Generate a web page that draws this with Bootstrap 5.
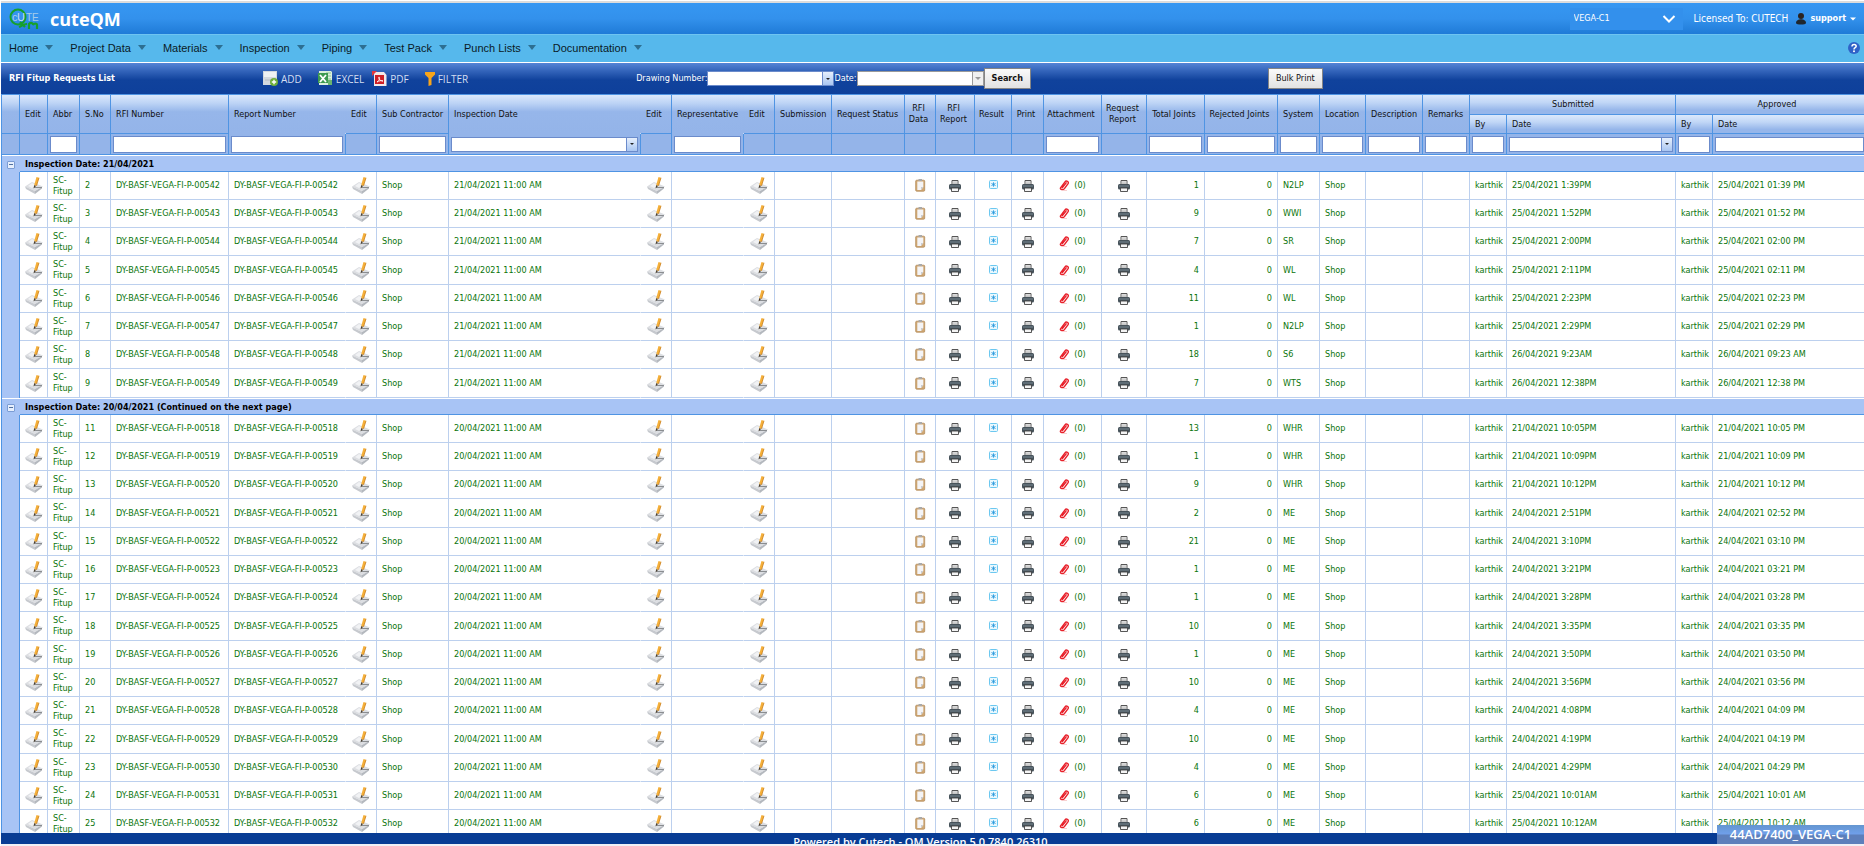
<!DOCTYPE html>
<html lang="en">
<head>
<meta charset="utf-8">
<meta name="viewport" content="width=device-width, initial-scale=1">
<title>cuteQM - RFI Fitup Requests List</title>
<link rel="stylesheet" href="https://cdn.jsdelivr.net/npm/bootstrap@5.3.0/dist/css/bootstrap.min.css">
<style>
:root{--line:#4f94e3;--soft:#bcd0ee;--ui:"DejaVu Sans Condensed","DejaVu Sans",sans-serif}
body{font-family:var(--ui);font-size:9px;line-height:11px;color:#111;background:#fff;padding:1px 0 0 1px}
input,select,button{font-family:inherit;font-size:inherit;line-height:inherit}
a{text-decoration:none}
.topline{height:2px;background:#dcdcdc}
.brandbar{height:31px;background:linear-gradient(#3697f2,#3391ec 50%,#1f7bd7);color:#fff;font-size:10px}
.brandname{font:bold 18px/24px "Open Sans",sans-serif;color:#fff;margin-left:10px}
.project{appearance:none;width:113px;height:22px;border:0;padding:0 4px;color:#fff;font-size:9px;margin-right:11px;
 background:#3390ec url("data:image/svg+xml,%3Csvg xmlns='http://www.w3.org/2000/svg' width='14' height='8'%3E%3Cpath d='M1.5 1l5.500 5.500L12.500 1' fill='none' stroke='%23fff' stroke-width='2'/%3E%3C/svg%3E") no-repeat right 7px center}
.user{font-weight:bold;color:#fff;font-size:9px}
.menubar{height:28px;padding-bottom:2px;background:#56b8ec;border-top:1px solid #6fc4f1;margin-bottom:1px;font:11px/14px "Liberation Sans",sans-serif}
.menubar .menu-item{color:#0a1a26;margin-right:17px;gap:7px}
.tri{border:4px solid transparent;border-top:5px solid #2d6f92;border-bottom:0}
.toolbar{height:31px;background:linear-gradient(#5484d6,#3465bb 25%,#10429c 55%,#0e409b);color:#fff}
.toolbar h1{font-size:9px;line-height:11px;width:254px}
.tool{font:10px/14px "Open Sans",sans-serif;color:#d4def2;gap:3px}
.searchset{margin-left:160px}
.searchset label{white-space:nowrap}
.bulk{margin-left:237px}
.pick{height:15px;border:1px solid #6b8bcb;background:#fff}
.pick input{border:0;outline:0;padding:0 2px;min-width:0;flex:1;background:#fff}
.pick button{border:0;border-left:1px solid #6b8bcb;width:11px;padding:0;background:linear-gradient(#e6effc,#a9c6f2)}
.pick button::after{content:"";border:2px solid transparent;border-top-color:#222;border-bottom:0}
.pick.wide{width:127px}
.pick.gray,.pick.gray button{border-color:#9a9a9a}
.pick.gray button{background:#f0f0f0}
.pick.gray button::after{border-width:3px;border-bottom:0;border-top-color:#999}
.push{border:1px solid #858585;border-radius:0;background:linear-gradient(#fafafa,#e2e2e2);color:#111;height:21px;padding:0 7px}
.gridwrap{min-height:0;overflow:hidden;background:#fff}
.listing{table-layout:fixed;width:calc(100% + 14px);border-collapse:separate;border-spacing:0;border-top:1px solid var(--line);border-left:1px solid var(--line)}
.listing th{font-weight:normal;padding:0 4px 0 5px;border-right:1px solid var(--line);border-bottom:1px solid var(--line);background:linear-gradient(#dbe8fc,#bcd3f5 22%,#96b6ea 44%,#94b4e9);vertical-align:middle}
.listing th.mid{text-align:center;padding:0 6px 0 3px}
.listing .r1{height:20px}.listing .r2{height:19px}.listing .r3{height:21px}
.listing .r1 th[colspan],.listing .r2 th{background:linear-gradient(#dbe8fc,#c0d6f6 40%,#96b6ea 80%)}
.listing th.open-b{border-bottom-color:#94b4e9}
.listing th.open-r{border-right-color:transparent}
.listing .r3 th{background:#94b4e9;padding:0 2px}
.listing .r3 input.plain{display:block;width:100%;height:17px;border:1px solid #6b8bcb;border-radius:0;background:#fff;outline:0;padding:0 2px}
.listing td{height:28px;padding:0 5px;border-right:1px solid var(--soft);border-bottom:1px solid var(--soft);color:#0a740a}
.listing tr.tall td{height:29px}
.listing td.open-r{border-right-color:transparent}
.listing td.side{background:#a8c4f5;border-right-color:var(--line);border-bottom:0;padding:0}
.listing .group td{height:17px;padding-top:2px;background:#a8c4f5;border-top:1px solid #fff;border-bottom:1px solid var(--line);border-right:0;color:#000;font-weight:bold}
.listing .group td.side{border-bottom-color:#a8c4f5;text-align:center}
.listing svg{display:block}
.fold{width:8px;height:8px;border:1px solid #7b9cd4;border-radius:1px;background:#e6effd;padding:0;display:block;margin:0 auto}
.fold::after{content:"";display:block;height:1px;background:#52719f;margin:0 1px}
.foot{height:13px;overflow:hidden;background:#083c94;border-bottom:2px solid #f0f0f6;color:#fff;padding-right:24px;font:600 11px/18px "Open Sans",sans-serif}
.stamp{right:0;bottom:2px;height:19px;width:147px;background:linear-gradient(#6496d0,#6f9fe9 45%,#5d7fbb 55%);color:#fff;font:600 13px/19px "Open Sans",sans-serif}
</style>
</head>
<body class="vh-100 d-flex flex-column overflow-hidden position-relative">
<svg class="d-none" aria-hidden="true">
 <symbol id="i-edit" viewBox="0 0 18 17"><path d="M0 9.500L7 5l11 4.500L10 14z" fill="#dcdee2"/><path d="M0 9.500L10 14v3L1 12z" fill="#c6c9ce"/><path d="M10 14l7-4v1.500L10 17z" fill="#b4b8be"/><path d="M3 9l4-3 4 2-4 3z" fill="#f1f2f4"/><path d="M9 10.500h8" stroke="#8a8d90" stroke-width="1"/><path d="M8.500 11.500l.8-3.500 2 .8z" fill="#4c4030"/><path d="M9.200 8L11.500 0l2.500.8-2.500 8z" fill="#f5b03a"/><path d="M11.500 8.800L14 .8" stroke="#c97d1a" stroke-width=".8"/></symbol>
 <symbol id="i-clip" viewBox="0 0 11 13"><rect x=".7" y="1.200" width="9" height="11" rx="1" fill="#d0a874" stroke="#b48c5a" stroke-width=".8"/><path d="M2.300 2.500h6V8L6 11H2.300z" fill="#f4f4f6"/><path d="M8.300 8L6 11V8z" fill="#c9ccd2"/><rect x="3.500" width="3.500" height="2" fill="#a9a9a9"/></symbol>
 <symbol id="i-print" viewBox="0 0 12 12"><path d="M3 .5h6v4H3z" fill="#fff" stroke="#555" stroke-width="1"/><path d="M4 2h4M4 3.300h4" stroke="#888" stroke-width=".6"/><rect y="4" width="12" height="5.500" rx="1.500" fill="#46525a"/><path d="M1 6h10" stroke="#8fa2ac" stroke-width=".7"/><path d="M2.500 8h7v3.500h-7z" fill="#f4f4f4" stroke="#444" stroke-width=".9"/></symbol>
 <symbol id="i-result" viewBox="0 0 9 11"><rect x=".5" y=".5" width="8" height="8" rx="1" fill="#e9f8fe" stroke="#6cc8f0"/><path d="M4.500 2.300v4.400M2.500 3.500l4 2M6.500 3.500l-4 2" stroke="#2a9ade" stroke-width=".9"/></symbol>
 <symbol id="i-attach" viewBox="0 0 11 11"><path d="M1.500 8L6 1.800c1.200-1.600 4.200-.2 3.100 1.800L5.400 8.600C4.300 10 .8 9.800 1.500 8zM3.600 7.400L7.200 2.900" fill="none" stroke="#e8202a" stroke-width="1.400" stroke-linecap="round"/><path d="M3 10.500h5" stroke="#f6c4c4" stroke-width=".8"/></symbol>
</svg>

<div class="topline flex-shrink-0"></div>
<header class="brandbar d-flex align-items-center flex-shrink-0">
 <svg class="ms-2" width="31" height="22" viewBox="0 0 31 22" role="img" aria-label="Cutech logo"><circle cx="9" cy="9" r="7.500" fill="none" stroke="#16a02c" stroke-width="2"/><path d="M11 14l5 5M10 19c3-1 4-3 8-3M20 21v-5c2-2 4-1 4 1 1-2 4-2 4 0v4" fill="none" stroke="#16a02c" stroke-width="2.200"/><text x="3" y="13" font-family="Liberation Sans, sans-serif" font-size="11" fill="#a8cdea">c</text><text x="8" y="13" font-family="Liberation Sans, sans-serif" font-size="11" fill="#c4ddef">U</text><text x="17" y="13" font-family="Liberation Sans, sans-serif" font-size="10" fill="#a8cdea">TE</text></svg>
 <a class="brandname" href="#">cuteQM</a>
 <select class="project ms-auto" aria-label="Project"><option>VEGA-C1</option></select>
 <span>Licensed To: CUTECH</span>
 <a class="user d-flex align-items-center ms-2 me-2" href="#"><svg class="me-1" width="10" height="12" viewBox="0 0 10 12"><circle cx="5" cy="3" r="3" fill="#2b2320"/><path d="M0 10c0-5 10-5 10 0 0 2-10 2-10 0z" fill="#1f262e"/></svg>support<svg class="ms-1" width="6" height="4"><path d="M0 .5h6L3 3.500z" fill="#fff"/></svg></a>
</header>

<nav class="menubar d-flex align-items-center flex-shrink-0" aria-label="Main">
 <div class="d-flex ms-2" id="menu"></div>
 <a class="ms-auto me-1 d-flex" href="#" aria-label="Help"><svg width="12" height="12" viewBox="0 0 12 12"><circle cx="6" cy="6" r="6" fill="#2f62c8"/><path d="M4 4.500c0-3 4.200-2.500 4.200-.3C8.200 5.700 6 5.600 6 7.400" fill="none" stroke="#fff" stroke-width="1.500"/><circle cx="6" cy="9.300" r="1" fill="#fff"/></svg></a>
</nav>

<div class="toolbar d-flex align-items-center flex-shrink-0 ps-2">
 <h1 class="mb-0 fw-bold flex-shrink-0">RFI Fitup Requests List</h1>
 <a class="tool d-flex align-items-center me-3" href="#"><svg width="15" height="15" viewBox="0 0 15 15"><path d="M0 0h14v14H0z" fill="#d3d9df"/><path d="M1 1h12v5H1z" fill="#eef1f3"/><path d="M2 9h7" stroke="#b5bcc4"/><circle cx="11" cy="11" r="4" fill="#6fae3a"/><path d="M11 8.800v4.400M8.800 11h4.400" stroke="#fff" stroke-width="1.400"/></svg>ADD</a>
 <a class="tool d-flex align-items-center me-2" href="#"><svg width="15" height="15" viewBox="0 0 15 15"><path d="M1 0h12l1 1v13H1z" fill="#dcefdc"/><path d="M8 2h5M8 5h5M8 8h5" stroke="#8cc490"/><path d="M0 2h10v10H0z" fill="#3d9a50"/><path d="M2 4l6 7M8 4l-6 7" stroke="#fff" stroke-width="1.800"/><path d="M10 9h4v5h-4z" fill="#6ab46f"/></svg>EXCEL</a>
 <a class="tool d-flex align-items-center me-3" href="#"><svg width="15" height="16" viewBox="0 0 15 16"><path d="M2 1h10l2.500 3v11H2z" fill="#f3e9e9"/><path d="M3 4h9v9H3z" fill="#cf1f26"/><path d="M5 11c3-2 3-5 2-5s0 4 4 4c-2-1-4 0-6 1z" fill="none" stroke="#fff" stroke-width=".9"/><path d="M0 0h5L0 5z" fill="#e2373c"/></svg>PDF</a>
 <a class="tool d-flex align-items-center" href="#"><svg width="10" height="14" viewBox="0 0 10 14"><path d="M0 0h10v2.500L6.500 6v7l-3 1V6L0 2.500z" fill="#f9a51a"/></svg>FILTER</a>
 <div class="searchset d-flex align-items-center ps-2">
  <label for="dwg">Drawing Number:</label>
  <div class="pick wide d-flex"><input id="dwg" type="text"><button type="button" class="d-flex align-items-center justify-content-center" aria-label="Choose drawing"></button></div>
  <label for="dt">Date:</label>
  <div class="pick wide gray d-flex"><input id="dt" type="text"><button type="button" class="d-flex align-items-center justify-content-center" aria-label="Choose date"></button></div>
  <button type="button" class="push fw-bold">Search</button>
 </div>
 <button type="button" class="push bulk">Bulk Print</button>
</div>

<main class="gridwrap flex-fill">
<table class="listing">
 <colgroup id="cols"></colgroup>
 <thead id="head"></thead>
 <tbody id="rows"></tbody>
</table>
</main>
<footer class="foot text-center flex-shrink-0">Powered by Cutech - QM Version 5.0.7840.26310</footer>
<div class="stamp position-absolute text-center">44AD7400_VEGA-C1</div>

<script src="https://cdn.jsdelivr.net/npm/bootstrap@5.3.0/dist/js/bootstrap.bundle.min.js"></script>
<script>
const $ = id => document.getElementById(id);
$('menu').innerHTML = ['Home','Project Data','Materials','Inspection','Piping','Test Pack','Punch Lists','Documentation']
 .map(t => `<a class="menu-item d-flex align-items-center" href="#">${t}<span class="tri"></span></a>`).join('');

// name, width, filter kind (t = text, d = date, '' = none), flags (o = joined to next column, c = centred)
const cols = [
 ['',18,'',''],['Edit',28,'',''],['Abbr',32,'t',''],['S.No',31,'',''],['RFI Number',118,'t',''],['Report Number',117,'t','o'],['Edit',31,'',''],
 ['Sub Contractor',72,'t',''],['Inspection Date',192,'d','o'],['Edit',31,'',''],['Representative',72,'t','o'],['Edit',31,'',''],['Submission',57,'',''],
 ['Request Status',73,'',''],['RFI Data',31,'','c'],['RFI Report',39,'','c'],['Result',37,'','c'],['Print',32,'','c'],['Attachment',58,'t','c'],
 ['Request Report',45,'','c'],['Total Joints',58,'t','c'],['Rejected Joints',73,'t','c'],['System',42,'t',''],['Location',46,'t',''],
 ['Description',57,'t',''],['Remarks',47,'t',''],['By',37,'t',''],['Date',169,'d',''],['By',37,'t',''],['Date',0,'d','']];
$('cols').innerHTML = cols.map(c => c[1] ? `<col style="width:${c[1]}px">` : '<col>').join('');
const pick = n => `<div class="pick d-flex"><input type="text" aria-label="Filter ${n}"><button type="button" class="d-flex align-items-center justify-content-center" aria-label="Choose ${n}"></button></div>`;
const top1 = cols.slice(0,26).map(c => `<th rowspan="2" class="${c[3]=='o'?'open-b open-r':c[3]=='c'?'mid':''}">${c[0]}</th>`).join('');
$('head').innerHTML = `<tr class="r1">${top1}<th colspan="2" class="text-center">Submitted</th><th colspan="2" class="text-center">Approved</th></tr>
<tr class="r2">${cols.slice(26).map(c => `<th>${c[0]}</th>`).join('')}</tr>
<tr class="r3">${cols.map(c => `<th>${c[2]=='t'?`<input class="plain" type="text" aria-label="Filter ${c[0]}">`:c[2]=='d'?pick(c[0]):''}</th>`).join('')}</tr>`;

// serial, RFI suffix, total joints, system, submitted, approved
const groups = [
 {title:'Inspection Date: 21/04/2021', date:'21/04/2021 11:00 AM', rows:[
  [2,'542',1,'N2LP','25/04/2021 1:39PM','25/04/2021 01:39 PM'],[3,'543',9,'WWI','25/04/2021 1:52PM','25/04/2021 01:52 PM'],
  [4,'544',7,'SR','25/04/2021 2:00PM','25/04/2021 02:00 PM'],[5,'545',4,'WL','25/04/2021 2:11PM','25/04/2021 02:11 PM'],
  [6,'546',11,'WL','25/04/2021 2:23PM','25/04/2021 02:23 PM'],[7,'547',1,'N2LP','25/04/2021 2:29PM','25/04/2021 02:29 PM'],
  [8,'548',18,'S6','26/04/2021 9:23AM','26/04/2021 09:23 AM'],[9,'549',7,'WTS','26/04/2021 12:38PM','26/04/2021 12:38 PM']]},
 {title:'Inspection Date: 20/04/2021 (Continued on the next page)', date:'20/04/2021 11:00 AM', rows:[
  [11,'518',13,'WHR','21/04/2021 10:05PM','21/04/2021 10:05 PM'],[12,'519',1,'WHR','21/04/2021 10:09PM','21/04/2021 10:09 PM'],
  [13,'520',9,'WHR','21/04/2021 10:12PM','21/04/2021 10:12 PM'],[14,'521',2,'ME','24/04/2021 2:51PM','24/04/2021 02:52 PM'],
  [15,'522',21,'ME','24/04/2021 3:10PM','24/04/2021 03:10 PM'],[16,'523',1,'ME','24/04/2021 3:21PM','24/04/2021 03:21 PM'],
  [17,'524',1,'ME','24/04/2021 3:28PM','24/04/2021 03:28 PM'],[18,'525',10,'ME','24/04/2021 3:35PM','24/04/2021 03:35 PM'],
  [19,'526',1,'ME','24/04/2021 3:50PM','24/04/2021 03:50 PM'],[20,'527',10,'ME','24/04/2021 3:56PM','24/04/2021 03:56 PM'],
  [21,'528',4,'ME','24/04/2021 4:08PM','24/04/2021 04:09 PM'],[22,'529',10,'ME','24/04/2021 4:19PM','24/04/2021 04:19 PM'],
  [23,'530',4,'ME','24/04/2021 4:29PM','24/04/2021 04:29 PM'],[24,'531',6,'ME','25/04/2021 10:01AM','25/04/2021 10:01 AM'],
  [25,'532',6,'ME','25/04/2021 10:12AM','25/04/2021 10:12 AM']]}];
const icon = (n,w,h,label) => `<a href="#" aria-label="${label}"><svg class="mx-auto" width="${w}" height="${h}"><use href="#i-${n}"/></svg></a>`;
const edit = `<td>${icon('edit',18,17,'Edit')}</td>`, print = `<td>${icon('print',12,12,'Print')}</td>`;
$('rows').innerHTML = groups.map(g => `<tr class="group"><td class="side"><button type="button" class="fold" aria-label="Collapse group"></button></td><td colspan="29">${g.title}</td></tr>` +
 g.rows.map((r,i) => { const no = 'DY-BASF-VEGA-FI-P-00'+r[1]; return `<tr class="${i%4==3?'tall':''}"><td class="side"></td>${edit}<td>SC-<br>Fitup</td><td>${r[0]}</td><td>${no}</td><td class="open-r">${no}</td>${edit}<td>Shop</td><td class="open-r">${g.date}</td>${edit}<td class="open-r"></td>${edit}<td></td><td></td><td>${icon('clip',11,13,'RFI data')}</td>${print}<td>${icon('result',9,11,'Result')}</td>${print}<td><a href="#" class="d-flex justify-content-center align-items-center gap-1 text-reset"><svg width="11" height="11"><use href="#i-attach"/></svg>(0)</a></td>${print}<td class="text-end">${r[2]}</td><td class="text-end">0</td><td>${r[3]}</td><td>Shop</td><td></td><td></td><td>karthik</td><td>${r[4]}</td><td>karthik</td><td>${r[5]}</td></tr>`; }).join('')).join('');
</script>
</body>
</html>
